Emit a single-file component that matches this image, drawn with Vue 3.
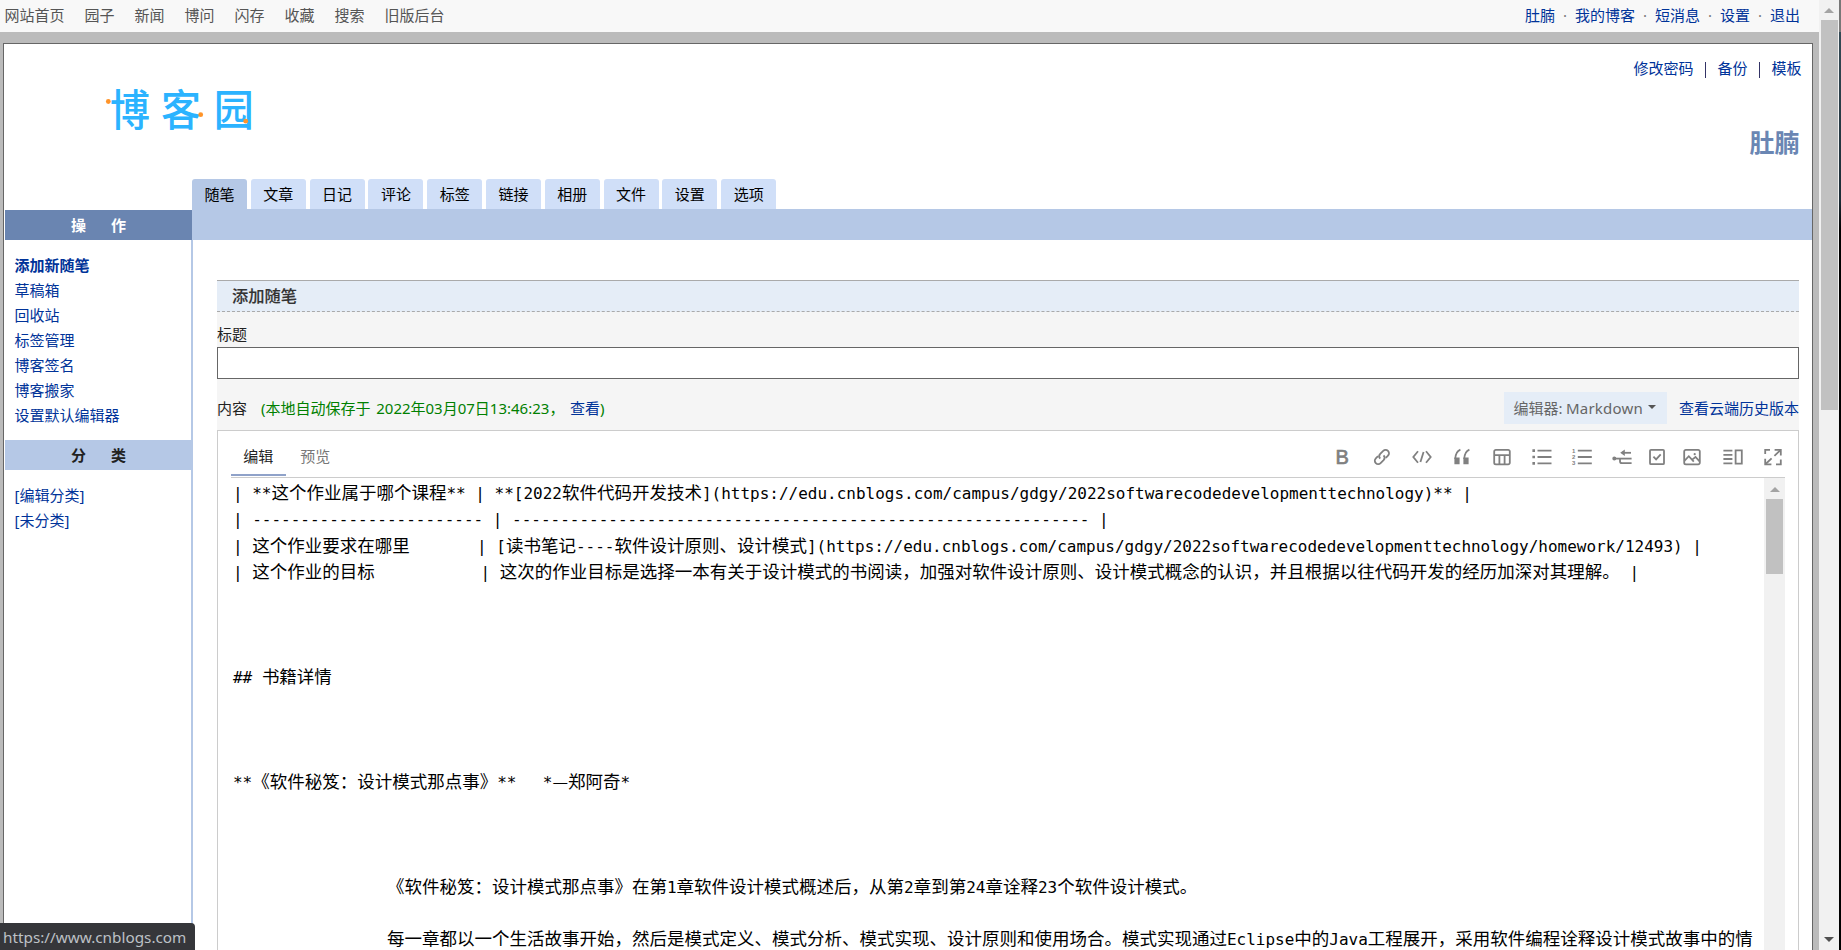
<template>
  <div class="window">
    <div class="page">
      <header class="topbar">
        <nav class="site-nav">
          <a v-for="item in siteNav" :key="item">{{ item }}</a>
        </nav>
        <nav class="user-nav">
          <template v-for="(item, index) in userNav" :key="item">
            <i v-if="index">·</i>
            <a>{{ item }}</a>
          </template>
        </nav>
      </header>

      <div class="container">
        <div class="banner">
          <svg class="logo" width="156" height="76" viewBox="0 -12 156 76">
            <g transform="scale(0.93 1)">
              <text x="6.6" y="41.5">博</text>
              <text x="61.3" y="41.5">客</text>
              <text x="118" y="41.5">园</text>
            </g>
            <circle cx="4.3" cy="17.5" r="2.4" />
            <circle cx="96.7" cy="30.7" r="2.4" />
            <circle cx="141.7" cy="37.2" r="2.4" />
          </svg>
          <div class="banner-right">
            <nav class="blog-links">
              <a>修改密码</a><i></i><a>备份</a><i></i><a>模板</a>
            </nav>
            <h1>肚腩</h1>
          </div>
        </div>

        <div class="tabs">
          <a v-for="(tab, index) in tabs" :key="tab" :class="{ active: index === 0 }">{{ tab }}</a>
        </div>

        <div class="body">
          <aside class="sidebar">
            <h2 class="side-title primary"><span>操</span><span>作</span></h2>
            <ul class="actions">
              <li v-for="(item, index) in actions" :key="item" :class="{ strong: index === 0 }">{{ item }}</li>
            </ul>
            <h2 class="side-title"><span>分</span><span>类</span></h2>
            <ul class="categories">
              <li>[编辑分类]</li>
              <li>[未分类]</li>
            </ul>
          </aside>

          <main class="main">
            <div class="band"></div>
            <section class="panel">
              <h3 class="panel-title">添加随笔</h3>
              <label class="field-label">标题</label>
              <input class="title-input" type="text" />
              <div class="content-bar">
                <span>内容</span>
                <span class="autosave">(本地自动保存于 2022年03月07日13:46:23， <a>查看</a>)</span>
                <button class="editor-type" type="button">
                  编辑器: <span class="name">Markdown</span><b class="caret"></b>
                </button>
                <a class="history">查看云端历史版本</a>
              </div>

              <div class="editor">
                <div class="editor-head">
                  <a class="mode active">编辑</a>
                  <a class="mode">预览</a>
                  <div class="tools">
                    <svg v-for="tool in tools" :key="tool.name" :class="['tool', tool.name]" viewBox="0 0 20 18">
                      <path v-for="(d, i) in tool.lines" :key="i" :d="d" />
                      <path v-if="tool.fill" class="fill" :d="tool.fill" />
                      <template v-if="tool.name === 'ol'">
                        <text x="0" y="5.2">1</text>
                        <text x="0" y="11.2">2</text>
                        <text x="0" y="17.2">3</text>
                      </template>
                      <text v-if="tool.name === 'bold'" x="3.6" y="16">B</text>
                    </svg>
                  </div>
                </div>
                <div class="editor-body">
                  <div class="source">
                    <div v-for="(line, i) in lines" :key="i" class="line"><template v-for="(run, j) in line" :key="j"><span v-if="run.latin" class="mono">{{ run.text }}</span><template v-else>{{ run.text }}</template></template></div>
                  </div>
                  <div class="scrollbar inner">
                    <i class="arrow up"></i>
                    <i class="thumb"></i>
                  </div>
                </div>
              </div>
            </section>
          </main>
        </div>
      </div>
    </div>

    <div class="scrollbar outer">
      <i class="arrow up"></i>
      <i class="thumb"></i>
      <i class="arrow down"></i>
    </div>
    <div class="edge"></div>
    <div class="status">https://www.cnblogs.com</div>
  </div>
</template>

<script setup>
const siteNav = ['网站首页', '园子', '新闻', '博问', '闪存', '收藏', '搜索', '旧版后台']
const userNav = ['肚腩', '我的博客', '短消息', '设置', '退出']
const tabs = ['随笔', '文章', '日记', '评论', '标签', '链接', '相册', '文件', '设置', '选项']
const actions = ['添加新随笔', '草稿箱', '回收站', '标签管理', '博客签名', '博客搬家', '设置默认编辑器']

// 中西文分段，西文用等宽字体
const splitRuns = (text) =>
  (text.match(/[\x20-\x7e]+|[^\x20-\x7e]+/g) || ['']).map((part) => ({
    text: part,
    latin: /^[\x20-\x7e]/.test(part),
  }))

const campus = 'https://edu.cnblogs.com/campus/gdgy/2022softwarecodedevelopmenttechnology'

const source = [
  `| **这个作业属于哪个课程** | **[2022软件代码开发技术](${campus})** |`,
  `| ${'-'.repeat(24)} | ${'-'.repeat(60)} |`,
  `| 这个作业要求在哪里       | [读书笔记----软件设计原则、设计模式](${campus}/homework/12493) |`,
  '| 这个作业的目标           | 这次的作业目标是选择一本有关于设计模式的书阅读，加强对软件设计原则、设计模式概念的认识，并且根据以往代码开发的经历加深对其理解。 |',
  '',
  '',
  '',
  '## 书籍详情',
  '',
  '',
  '',
  '**《软件秘笈：设计模式那点事》**\u2003\u2002*—郑阿奇*',
  '',
  '',
  '',
  `${' '.repeat(16)}《软件秘笈：设计模式那点事》在第1章软件设计模式概述后，从第2章到第24章诠释23个软件设计模式。`,
  '',
  `${' '.repeat(16)}每一章都以一个生活故事开始，然后是模式定义、模式分析、模式实现、设计原则和使用场合。模式实现通过Eclipse中的Java工程展开，采用软件编程诠释设计模式故事中的情`,
]

const lines = source.map(splitRuns)

const tools = [
  { name: 'bold', lines: [] },
  {
    name: 'link',
    lines: [
      'M8.2 10.6a3.4 3.4 0 0 1 0-4.7l3-3a3.4 3.4 0 0 1 4.8 0a3.4 3.4 0 0 1 0 4.8l-2.2 2.2',
      'M11.6 7.4a3.4 3.4 0 0 1 0 4.7l-3 3a3.4 3.4 0 0 1-4.8 0a3.4 3.4 0 0 1 0-4.8l2.2-2.2',
    ],
  },
  { name: 'code', lines: ['M6 3.2L1.3 9L6 14.8', 'M14 3.2L18.7 9L14 14.8', 'M11.6 4L8.4 14'] },
  {
    name: 'quote',
    lines: ['M8.4 1.6C5 3 3.4 6.5 3.2 11', 'M17.4 1.6C14 3 12.4 6.5 12.2 11'],
    fill: 'M2.4 9.5h5.2v6.7H2.4zM11.4 9.5h5.2v6.7h-5.2z',
  },
  {
    name: 'table',
    lines: ['M3.8 1.8h12.4a1.6 1.6 0 0 1 1.6 1.6v11.4a1.6 1.6 0 0 1-1.6 1.6H3.8a1.6 1.6 0 0 1-1.6-1.6V3.4a1.6 1.6 0 0 1 1.6-1.6z', 'M2 7.2h16M7.4 7.2v9.2M12.6 7.2v9.2'],
  },
  {
    name: 'ul',
    lines: ['M5.5 2.6h14M5.5 9h14M5.5 15.4h14'],
    fill: 'M.4 1.3h2.6v2.6H.4zM.4 7.7h2.6v2.6H.4zM.4 14.1h2.6v2.6H.4z',
  },
  { name: 'ol', lines: ['M5.8 2.6h14M5.8 9h14M5.8 15.4h14'] },
  {
    name: 'tree',
    lines: ['M2 10.6h17.6', 'M10 4.8h9', 'M8 10.6v2.6a2 2 0 0 0 2 2h9.6'],
    fill: 'M.3 10.6a2 2 0 1 0 4 0a2 2 0 1 0-4 0zM8.2 4.8l4.6-3.3v6.6z',
  },
  {
    name: 'check',
    lines: ['M4 1.8h12a1 1 0 0 1 1 1v12.4a1 1 0 0 1-1 1H4a1 1 0 0 1-1-1V2.8a1 1 0 0 1 1-1z', 'M6.4 8.6l2.7 2.8l4.6-5'],
  },
  {
    name: 'image',
    lines: ['M3.8 1.8h12.4a1.6 1.6 0 0 1 1.6 1.6v11.4a1.6 1.6 0 0 1-1.6 1.6H3.8a1.6 1.6 0 0 1-1.6-1.6V3.4a1.6 1.6 0 0 1 1.6-1.6z', 'M2.4 12.8l4.4-4.6l5 5.4M10.2 11.6l3.3-2.6l4.3 4.6'],
    fill: 'M11.6 6.2a1.1 1.1 0 1 0 2.2 0a1.1 1.1 0 1 0-2.2 0z',
  },
  { name: 'split', lines: ['M.4 2.6h9M.4 6.8h9M.4 11h9M.4 15.4h9', 'M12.6 2.4h6.2v13.2h-6.2z'] },
  {
    name: 'full',
    lines: ['M2.2 6V1.8H7M11.6 1.8h6.2V7.4M17.8 11.4v5H13M8.4 16.4H2.2V10.8', 'M17.4 2.2l-6 5.6M2.6 16l6-5.6'],
  },
]
</script>

<style>
body {
  overflow: hidden;
}
</style>

<style scoped>
.window {
  position: relative;
  display: flex;
  width: 1841px;
  height: 950px;
  overflow: hidden;
  color: #222;
  background: #bbb;
  font: 15px/25px "Noto Sans", "Noto Sans CJK SC", sans-serif;
}

a {
  color: #039;
}

i {
  font-style: normal;
}

ul,
h1,
h2,
h3 {
  margin: 0;
  padding: 0;
  list-style: none;
}

.page {
  display: flex;
  flex: 1;
  flex-direction: column;
  min-width: 0;
}

.topbar {
  display: flex;
  flex: none;
  justify-content: space-between;
  box-sizing: border-box;
  height: 32px;
  padding: 3px 19px 0 4.5px;
  background: #f8f8f8;
}

.site-nav {
  display: flex;
  gap: 20px;
}

.site-nav a {
  color: #555;
}

.user-nav {
  display: flex;
}

.user-nav i {
  width: 20px;
  color: #777;
  text-align: center;
}

.container {
  display: flex;
  flex: 1;
  flex-direction: column;
  min-height: 0;
  margin: 11px 6px 0 3px;
  border: 1px solid #666;
  border-bottom: 0;
  background: #fff;
}

.banner {
  display: flex;
  flex: none;
  justify-content: space-between;
  height: 135px;
}

.logo {
  margin: 28px 0 0 100px;
}

.logo text {
  fill: #2bb3ff;
  font: 500 43px "Noto Sans CJK SC", sans-serif;
}

.logo circle {
  fill: #ff9429;
}

.banner-right {
  padding: 12px 10.5px 0 0;
}

.blog-links {
  display: flex;
  align-items: center;
}

.blog-links i {
  width: 1px;
  height: 16px;
  margin: 2px 11px 0 12px;
  background: #336;
}

.banner-right h1 {
  margin: 43px 2px 0 0;
  color: #6a86b3;
  font-size: 25px;
  line-height: 36px;
  text-align: right;
}

.tabs {
  display: flex;
  flex: none;
  gap: 3.8px;
  height: 30px;
  padding-left: 188px;
}

.tabs a {
  width: 55px;
  color: #000;
  line-height: 31px;
  text-align: center;
  border-radius: 3px 3px 0 0;
  background: #d0dff8;
}

.tabs a.active {
  background: #b5c8e6;
}

.body {
  display: flex;
  flex: 1;
  min-height: 0;
}

.sidebar {
  box-sizing: border-box;
  width: 188px;
  padding: 1px 0 0 1px;
}

.side-title {
  display: flex;
  justify-content: center;
  gap: 25px;
  height: 30px;
  font-size: 15px;
  line-height: 30px;
  background: #b5c8e6;
}

.side-title.primary {
  color: #fff;
  background: #6a85b1;
}

.sidebar ul {
  padding: 13px 0 12px 9.5px;
  color: #039;
}

.sidebar .strong {
  font-weight: bold;
}

.main {
  display: flex;
  flex: 1;
  flex-direction: column;
  min-width: 0;
}

.band {
  flex: none;
  height: 31px;
  background: #b5c8e6;
}

.panel {
  display: flex;
  flex: 1;
  flex-direction: column;
  min-height: 0;
  padding: 40px 13px 0 24px;
  border-left: 2px solid #b5c8e6;
  margin-left: -1px;
}

.panel-title {
  box-sizing: border-box;
  flex: none;
  height: 32px;
  padding-left: 15px;
  color: #333;
  font-size: 16.25px;
  font-weight: 500;
  line-height: 30px;
  border-top: 1px solid #aaa;
  border-bottom: 1px dashed #aaa;
  background: #e5edf7;
  -webkit-text-stroke: 0.15px #333;
}

.field-label {
  flex: none;
  height: 35px;
  line-height: 45px;
  background: #f5f5f5;
}

.title-input {
  box-sizing: border-box;
  flex: none;
  width: 100%;
  height: 32px;
  border: 1px solid #666;
  border-radius: 0;
  background: #fff;
}

.content-bar {
  display: flex;
  flex: none;
  align-items: center;
  box-sizing: border-box;
  height: 51px;
  padding-top: 7px;
  background: #f5f5f5;
}

.autosave {
  margin-left: 14px;
  color: #008000;
  word-spacing: 1.8px;
}

.editor-type {
  display: flex;
  align-items: center;
  width: 163px;
  height: 32px;
  margin: 0 12px 0 auto;
  padding: 0 0 0 9.5px;
  color: #666;
  border: 0;
  background: #e5edf7;
  font: inherit;
}

.editor-type .name {
  margin-left: 3.5px;
  letter-spacing: 0.2px;
}

.caret {
  margin: -2px 0 0 5px;
  border: 4.5px solid transparent;
  border-top-color: #555;
  border-bottom: 0;
}

.editor {
  display: flex;
  flex: 1;
  flex-direction: column;
  min-height: 0;
  padding: 0 13px;
  border: 1px solid #ccc;
  border-bottom: 0;
}

.editor-head {
  display: flex;
  flex: none;
  box-sizing: border-box;
  height: 47px;
  border-bottom: 1px solid #ccc;
}

.mode {
  box-sizing: border-box;
  width: 55px;
  height: 45px;
  margin-right: 2px;
  padding: 13px 0.5px 0 0;
  color: #777;
  text-align: center;
}

.mode.active {
  color: #222;
  border-bottom: 2px solid #8fa2c9;
}

.tools {
  display: flex;
  align-items: center;
  margin: 6px 2px 0 auto;
  gap: 20px;
}

.tool {
  width: 20px;
  height: 18px;
  overflow: visible;
  fill: none;
  stroke: #808080;
  stroke-width: 1.8;
}

.tool .fill,
.tool text {
  fill: #808080;
  stroke: none;
}

.tool text {
  font: bold 6px "Liberation Sans", sans-serif;
}

.tool.bold text {
  font: 20px "Liberation Sans", sans-serif;
  stroke: #808080;
  stroke-width: 0.7;
}

.tool.tree {
  margin-right: -5px;
}

.tool.check {
  margin-right: -5px;
}

.tool.image {
  margin-right: 1px;
}

.editor-body {
  display: flex;
  flex: 1;
  min-height: 0;
}

.source {
  flex: 1;
  min-width: 0;
  padding: 1px 0 0 2px;
  overflow: hidden;
  color: #000;
  font: 17.5px/26.25px "Noto Sans CJK SC", sans-serif;
  white-space: pre;
}

.line {
  height: 26.25px;
}

.mono {
  font-family: "DejaVu Sans Mono", monospace;
  font-size: 15.99px;
}

.scrollbar {
  display: flex;
  flex-direction: column;
  align-items: center;
  background: #f1f1f1;
}

.scrollbar .thumb {
  width: 17px;
  background: #c1c1c1;
}

.scrollbar .arrow {
  border: 5px solid transparent;
}

.scrollbar .up {
  border-top: 0;
  border-bottom-color: #a3a3a3;
}

.scrollbar .down {
  margin: auto 0 8px;
  border-bottom: 0;
  border-top-color: #505050;
}

.inner {
  width: 21px;
}

.inner .up {
  margin: 9px 0 7px;
}

.inner .thumb {
  height: 75px;
}

.outer {
  width: 20px;
}

.outer .up {
  margin: 8px 0 7px;
}

.outer .thumb {
  height: 390px;
}

.edge {
  width: 2px;
  background: linear-gradient(#777 0 32px, #344a55 32px, #1c2c36 200px, #000 230px);
}

.status {
  position: absolute;
  bottom: 0;
  left: 0;
  box-sizing: border-box;
  width: 195px;
  height: 27px;
  padding-left: 3px;
  color: #bdc1c6;
  font-size: 15.3px;
  line-height: 28px;
  border-radius: 0 4px 0 0;
  background: #35363a;
}
</style>
